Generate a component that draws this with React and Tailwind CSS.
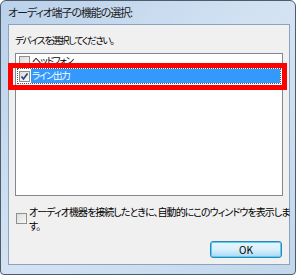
import React from "react";

const font = { fontFamily: '"Noto Sans CJK JP", "Noto Sans", sans-serif', fontFeatureSettings: '"palt"' };

const Check = ({ checked }) => (
  <div className="w-[11px] h-[11px] border border-[#8e8f8f] bg-gradient-to-br from-[#dcdcdc] to-[#f8f8f8] flex items-center justify-center shrink-0">
    {checked && (
      <svg width="9" height="9" viewBox="0 0 9 9">
        <path d="M1.5 4.5 L3.5 7 L7.5 1.5" stroke="#2a3f7a" strokeWidth="1.6" fill="none" />
      </svg>
    )}
  </div>
);

export default function App() {
  const rows = [
    { id: 1, text: "ヘッドフォン", checked: false, selected: false },
    { id: 2, text: "ライン出力", checked: true, selected: true },
  ];

  return (
    <div className="w-[296px] h-[275px] overflow-hidden bg-white" style={font}>
      <div className="relative w-[296px] h-[275px] rounded-t-[6px] rounded-b-[4px] border border-[#4d5b6b] bg-gradient-to-br from-[#b9d1ea] via-[#d4e3f3] to-[#c2d7ec] flex flex-col pl-[7px] pr-[5px] pb-[9px]">
        {/* title */}
        <div className="h-[23px] flex items-center text-[11px] tracking-[-1.1px] text-[#1b1b1b] leading-none">
          オーディオ端子の機能の選択:
        </div>

        {/* content */}
        <div className="flex-1 min-w-0 border border-[#8da2bb] bg-[#f0f0f0] flex flex-col px-[6px] text-[9.5px] tracking-[-1.3px] text-black leading-none">
          <div className="mt-[10px] h-[12px] flex items-center">デバイスを選択してください。</div>

          <div className="mt-[6px] h-[143px] border border-[#828790] bg-white px-[1px]">
            {rows.map((r) => (
              <div
                key={r.id}
                className={`flex items-center pl-[1px] ${r.selected ? "h-[16px] border border-dotted border-[#555]" : "h-[14px] border border-transparent"}`}
              >
                <Check checked={r.checked} />
                <div
                  className={`h-[14px] flex-1 flex items-center pl-[1px] ml-[1px] ${r.selected ? "bg-[#3399ff] text-white" : "text-black"}`}
                >
                  {r.text}
                </div>
              </div>
            ))}
          </div>

          <div className="mt-[9px] flex items-start pl-[1px]">
            <div className="mt-[8px]">
              <Check checked={false} />
            </div>
            <div className="ml-[2px] text-[10px] tracking-[-0.95px] whitespace-nowrap">
              <div className="h-[14px] leading-[14px]">オーディオ機器を接続したときに、自動的にこのウィンドウを表示しま</div>
              <div className="h-[13px] leading-[13px]">す。</div>
            </div>
          </div>

          <div className="flex-1 flex items-end justify-end pb-[6px] pr-[1px]">
            <button className="w-[72px] h-[17px] rounded-[3px] border border-[#3c7fb1] bg-gradient-to-b from-[#eaf6fd] via-[#d9f0fc] to-[#a7d9f5] text-[10px] tracking-normal text-black leading-none flex items-center justify-center shadow-[inset_0_0_0_1px_#48d6fe]">
              OK
            </button>
          </div>
        </div>

        {/* red annotation */}
        <div className="absolute left-[7px] top-[62px] w-[279px] h-[27px] border-[5px] border-[#ff0000]" />
      </div>
    </div>
  );
}
